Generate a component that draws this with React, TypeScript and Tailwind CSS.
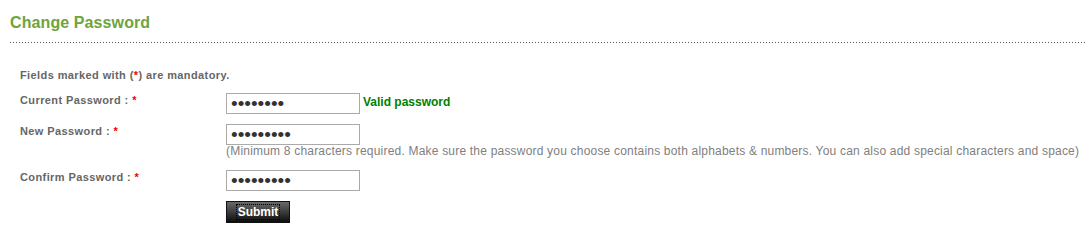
const labelCls = "w-[206px] pt-[1px] text-[11px] font-bold leading-[13px] tracking-[0.4px] text-[#666]";
const inputCls =
  "block h-[21px] w-[134px] border border-[#aaa] px-[4px] text-[19px] leading-[19px] text-[#333] outline-none";

export default function App() {
  return (
    <div className="h-[233px] w-[1090px] bg-white font-['Liberation_Sans',Arial,sans-serif]">
      <div className="px-[10px] pt-[13px]">
        <h2 className="text-[16px] font-bold leading-[20px] tracking-[0.1px] text-[#6ea43a]">Change Password</h2>
        <div className="mt-[9px] h-px w-[1077px] bg-[repeating-linear-gradient(to_right,#555_0_1px,transparent_1px_3px)]" />
      </div>

      <form className="pl-5 pt-[26px]" onSubmit={(e) => e.preventDefault()}>
        <p className="text-[11px] font-bold leading-[13px] tracking-[0.4px] text-[#666]">
          Fields marked with (<span className="text-[#e00]">*</span>) are mandatory.
        </p>

        <div className="mt-[11px] flex items-start">
          <label className={labelCls}>
            Current Password : <span className="text-[#e00]">*</span>
          </label>
          <input type="password" readOnly defaultValue="abcdefgh" className={inputCls} />
          <span className="ml-[3px] pt-[2px] text-[12px] font-bold leading-[14px] text-[#008000]">Valid password</span>
        </div>

        <div className="mt-[10px] flex items-start">
          <label className={labelCls}>
            New Password : <span className="text-[#e00]">*</span>
          </label>
          <div>
            <input type="password" readOnly defaultValue="abcdefghi" className={inputCls} />
            <p className="text-[12px] leading-[13px] tracking-[0.2px] text-[#808080]">
              (Minimum 8 characters required. Make sure the password you choose contains both alphabets &amp; numbers. You can also add special characters and space)
            </p>
          </div>
        </div>

        <div className="mt-[12px] flex items-start">
          <label className={labelCls}>
            Confirm Password : <span className="text-[#e00]">*</span>
          </label>
          <input type="password" readOnly defaultValue="abcdefghi" className={inputCls} />
        </div>

        <div className="mt-[10px] flex pl-[206px]">
          <button
            type="submit"
            className="flex h-[22px] w-[64px] items-center justify-center border border-[#111] bg-[linear-gradient(to_bottom,#6a6a6a,#0d0d0d)] text-[12px] font-bold leading-[14px] text-white"
          >
            <span className="border border-dotted border-black px-[1px]">Submit</span>
          </button>
        </div>
      </form>
    </div>
  );
}
